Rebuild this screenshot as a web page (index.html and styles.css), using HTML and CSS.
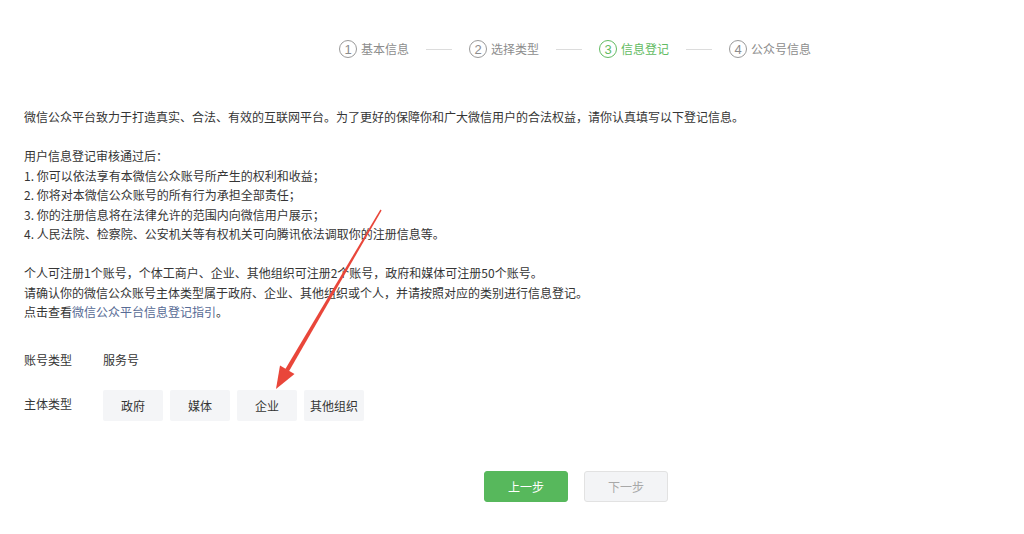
FILE: index.html
```html
<!DOCTYPE html>
<html lang="zh-CN">
<head>
<meta charset="utf-8">
<title>信息登记</title>
<link rel="stylesheet" href="styles.css">
</head>
<body>
<div class="page">
  <div class="steps">
    <div class="step"><span class="num">1</span><span class="label">基本信息</span></div>
    <span class="sep"></span>
    <div class="step"><span class="num">2</span><span class="label">选择类型</span></div>
    <span class="sep"></span>
    <div class="step active"><span class="num">3</span><span class="label">信息登记</span></div>
    <span class="sep"></span>
    <div class="step"><span class="num">4</span><span class="label">公众号信息</span></div>
  </div>

  <div class="content">
    <p>微信公众平台致力于打造真实、合法、有效的互联网平台。为了更好的保障你和广大微信用户的合法权益，请你认真填写以下登记信息。</p>
    <p>用户信息登记审核通过后：<br>1. 你可以依法享有本微信公众账号所产生的权利和收益；<br>2. 你将对本微信公众账号的所有行为承担全部责任；<br>3. 你的注册信息将在法律允许的范围内向微信用户展示；<br>4. 人民法院、检察院、公安机关等有权机关可向腾讯依法调取你的注册信息等。</p>
    <p>个人可注册1个账号，个体工商户、企业、其他组织可注册2个账号，政府和媒体可注册50个账号。<br>请确认你的微信公众账号主体类型属于政府、企业、其他组织或个人，并请按照对应的类别进行信息登记。<br>点击查看<a class="link" href="#">微信公众平台信息登记指引</a>。</p>

    <div class="form">
      <div class="row">
        <span class="key">账号类型</span>
        <span class="val">服务号</span>
      </div>
      <div class="row row-types">
        <span class="key">主体类型</span>
        <div class="types">
          <span class="type">政府</span>
          <span class="type">媒体</span>
          <span class="type">企业</span>
          <span class="type">其他组织</span>
        </div>
      </div>
    </div>

    <div class="actions">
      <button class="btn btn-primary">上一步</button>
      <button class="btn btn-disabled">下一步</button>
    </div>
  </div>

  <svg class="arrow" width="1024" height="534" viewBox="0 0 1024 534">
    <polygon fill="#e9463a" points="381.6,210.4 380.4,209.6 285.2,369.2 289,371.3"/>
    <polygon fill="#e9463a" points="276,389 280,365.5 294.5,374"/>
  </svg>
</div>
</body>
</html>
```

FILE: styles.css
```css
* { box-sizing: border-box; }
html, body { margin: 0; padding: 0; background: #fff; }
body {
  font-family: "Microsoft YaHei", "Noto Sans CJK SC", "Noto Sans", sans-serif;
  font-size: 12px;
  color: #353535;
}
.page {
  position: relative;
  width: 1024px;
  height: 534px;
  overflow: hidden;
}
.steps {
  display: flex;
  align-items: center;
  height: 18px;
  margin-top: 40px;
  padding-left: 339px;
  color: #8d8d8d;
}
.step {
  display: flex;
  align-items: center;
}
.num {
  width: 18px;
  height: 18px;
  border: 1px solid #9a9a9a;
  border-radius: 50%;
  display: flex;
  align-items: center;
  justify-content: center;
  font-family: "Liberation Sans", Arial, sans-serif;
  font-size: 13px;
  line-height: 1;
  margin-right: 4px;
}
.label { font-size: 12px; line-height: 18px; }
.sep {
  width: 26px;
  height: 1px;
  background: #dcdcdc;
  margin: 0 17px;
}
.step.active { color: #62bb62; }
.step.active .num { border-color: #62bb62; }

.content {
  padding-left: 24px;
  margin-top: 49px;
}
.content p {
  margin: 0 0 19.5px 0;
  line-height: 19.5px;
}
.link { color: #576b95; text-decoration: none; }

.form { margin-top: 29px; }
.row {
  display: flex;
  align-items: center;
}
.key { width: 79px; color: #353535; }
.val { color: #353535; }
.row-types { margin-top: 22px; }
.row-types .key { margin-top: -4px; }
.types { display: flex; gap: 7px; }
.type {
  width: 60px;
  height: 31px;
  background: #f4f5f7;
  border-radius: 2px;
  display: flex;
  align-items: center;
  justify-content: center;
  color: #353535;
}

.actions {
  display: flex;
  gap: 16px;
  padding-left: 460px;
  margin-top: 50px;
}
.btn {
  width: 84px;
  height: 31px;
  border-radius: 3px;
  font-family: inherit;
  font-size: 12px;
  padding: 0;
}
.btn-primary {
  background: #57b85c;
  border: 1px solid #57b85c;
  color: #fff;
}
.btn-disabled {
  background: #f3f4f6;
  border: 1px solid #e2e2e2;
  color: #a8a8a8;
}
.arrow {
  position: absolute;
  left: 0;
  top: 0;
  pointer-events: none;
}
```
